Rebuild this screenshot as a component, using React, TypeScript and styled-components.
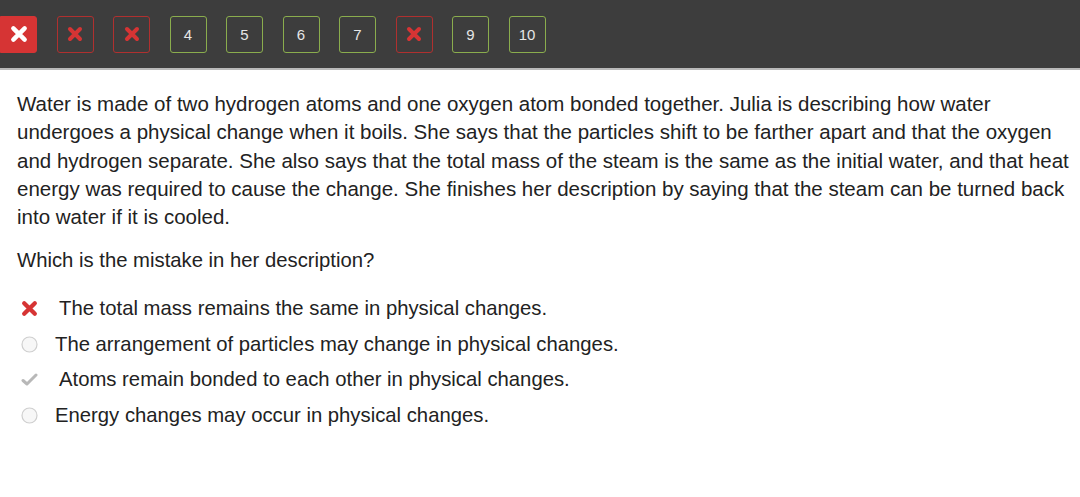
import React from "react";
import styled, { createGlobalStyle } from "styled-components";

const GlobalStyle = createGlobalStyle`
  html, body {
    margin: 0;
    padding: 0;
    background: #ffffff;
  }
  body {
    font-family: "Liberation Sans", Arial, sans-serif;
    color: #222222;
  }
`;

const TopBar = styled.header`
  height: 68px;
  background: #3d3d3d;
  border-bottom: 2px solid #b9b9b9;
  display: flex;
  align-items: center;
  gap: 19.5px;
`;

type Tone = "current" | "wrong" | "right";

const Tile = styled.div<{ $tone: Tone }>`
  width: 37px;
  height: 37px;
  box-sizing: border-box;
  display: flex;
  align-items: center;
  justify-content: center;
  font-size: 15px;
  color: #e6e6e6;
  border: 1.5px solid
    ${(p) => (p.$tone === "right" ? "#8aad4d" : p.$tone === "wrong" ? "#b0302f" : "#d63434")};
  background: ${(p) => (p.$tone === "current" ? "#d63434" : "transparent")};
  border-radius: ${(p) => (p.$tone === "current" ? "0 3px 3px 0" : "3px")};
`;

const Content = styled.main`
  padding: 20px 8px 0 17px;
`;

const Passage = styled.p`
  margin: 0;
  font-size: 20.5px;
  line-height: 28.3px;
  color: #222222;
`;

const Prompt = styled.p`
  margin: 15px 0 0;
  font-size: 20.3px;
  line-height: 28px;
  color: #222222;
`;

const Choices = styled.ul`
  list-style: none;
  margin: 20px 0 0;
  padding: 0 0 0 4px;
  display: flex;
  flex-direction: column;
  gap: 7.7px;
`;

const Choice = styled.li`
  display: flex;
  align-items: center;
  height: 28px;
  font-size: 20.3px;
  color: #222222;
`;

const Mark = styled.span<{ $wide?: boolean }>`
  width: ${(p) => (p.$wide ? "38px" : "34px")};
  display: flex;
  align-items: center;
  flex-shrink: 0;
`;

const Cross = ({ size, color }: { size: number; color: string }) => (
  <svg width={size} height={size} viewBox="0 0 16 16">
    <path
      d="M3 3 L13 13 M13 3 L3 13"
      stroke={color}
      strokeWidth={4}
      strokeLinecap="round"
    />
  </svg>
);

const Radio = () => (
  <svg width={17} height={17} viewBox="0 0 17 17">
    <circle cx="8.5" cy="8.5" r="7.5" fill="#f7f7f7" stroke="#cfcfcf" strokeWidth={1.2} />
  </svg>
);

const Check = () => (
  <svg width={17} height={15} viewBox="0 0 17 15">
    <path
      d="M2 8.5 L6 12 L15 3"
      fill="none"
      stroke="#b8b8b8"
      strokeWidth={3}
      strokeLinecap="round"
      strokeLinejoin="round"
    />
  </svg>
);

const tiles: { label: string; tone: Tone }[] = [
  { label: "x", tone: "current" },
  { label: "x", tone: "wrong" },
  { label: "x", tone: "wrong" },
  { label: "4", tone: "right" },
  { label: "5", tone: "right" },
  { label: "6", tone: "right" },
  { label: "7", tone: "right" },
  { label: "x", tone: "wrong" },
  { label: "9", tone: "right" },
  { label: "10", tone: "right" },
];

const choices: { text: string; mark: "cross" | "radio" | "check" }[] = [
  { text: "The total mass remains the same in physical changes.", mark: "cross" },
  { text: "The arrangement of particles may change in physical changes.", mark: "radio" },
  { text: "Atoms remain bonded to each other in physical changes.", mark: "check" },
  { text: "Energy changes may occur in physical changes.", mark: "radio" },
];

export default function App() {
  return (
    <>
      <GlobalStyle />
      <TopBar>
        {tiles.map((t, i) => (
          <Tile key={i} $tone={t.tone}>
            {t.label === "x" ? (
              <Cross size={t.tone === "current" ? 18 : 16} color={t.tone === "current" ? "#ffffff" : "#d63434"} />
            ) : (
              t.label
            )}
          </Tile>
        ))}
      </TopBar>
      <Content>
        <Passage>
          Water is made of two hydrogen atoms and one oxygen atom bonded together. Julia is describing how water
          undergoes a physical change when it boils. She says that the particles shift to be farther apart and that the
          oxygen and hydrogen separate. She also says that the total mass of the steam is the same as the initial water,
          and that heat energy was required to cause the change. She finishes her description by saying that the steam
          can be turned back into water if it is cooled.
        </Passage>
        <Prompt>Which is the mistake in her description?</Prompt>
        <Choices>
          {choices.map((c, i) => (
            <Choice key={i}>
              <Mark $wide={c.mark !== "radio"}>
                {c.mark === "cross" && <Cross size={17} color="#d63434" />}
                {c.mark === "radio" && <Radio />}
                {c.mark === "check" && <Check />}
              </Mark>
              {c.text}
            </Choice>
          ))}
        </Choices>
      </Content>
    </>
  );
}
